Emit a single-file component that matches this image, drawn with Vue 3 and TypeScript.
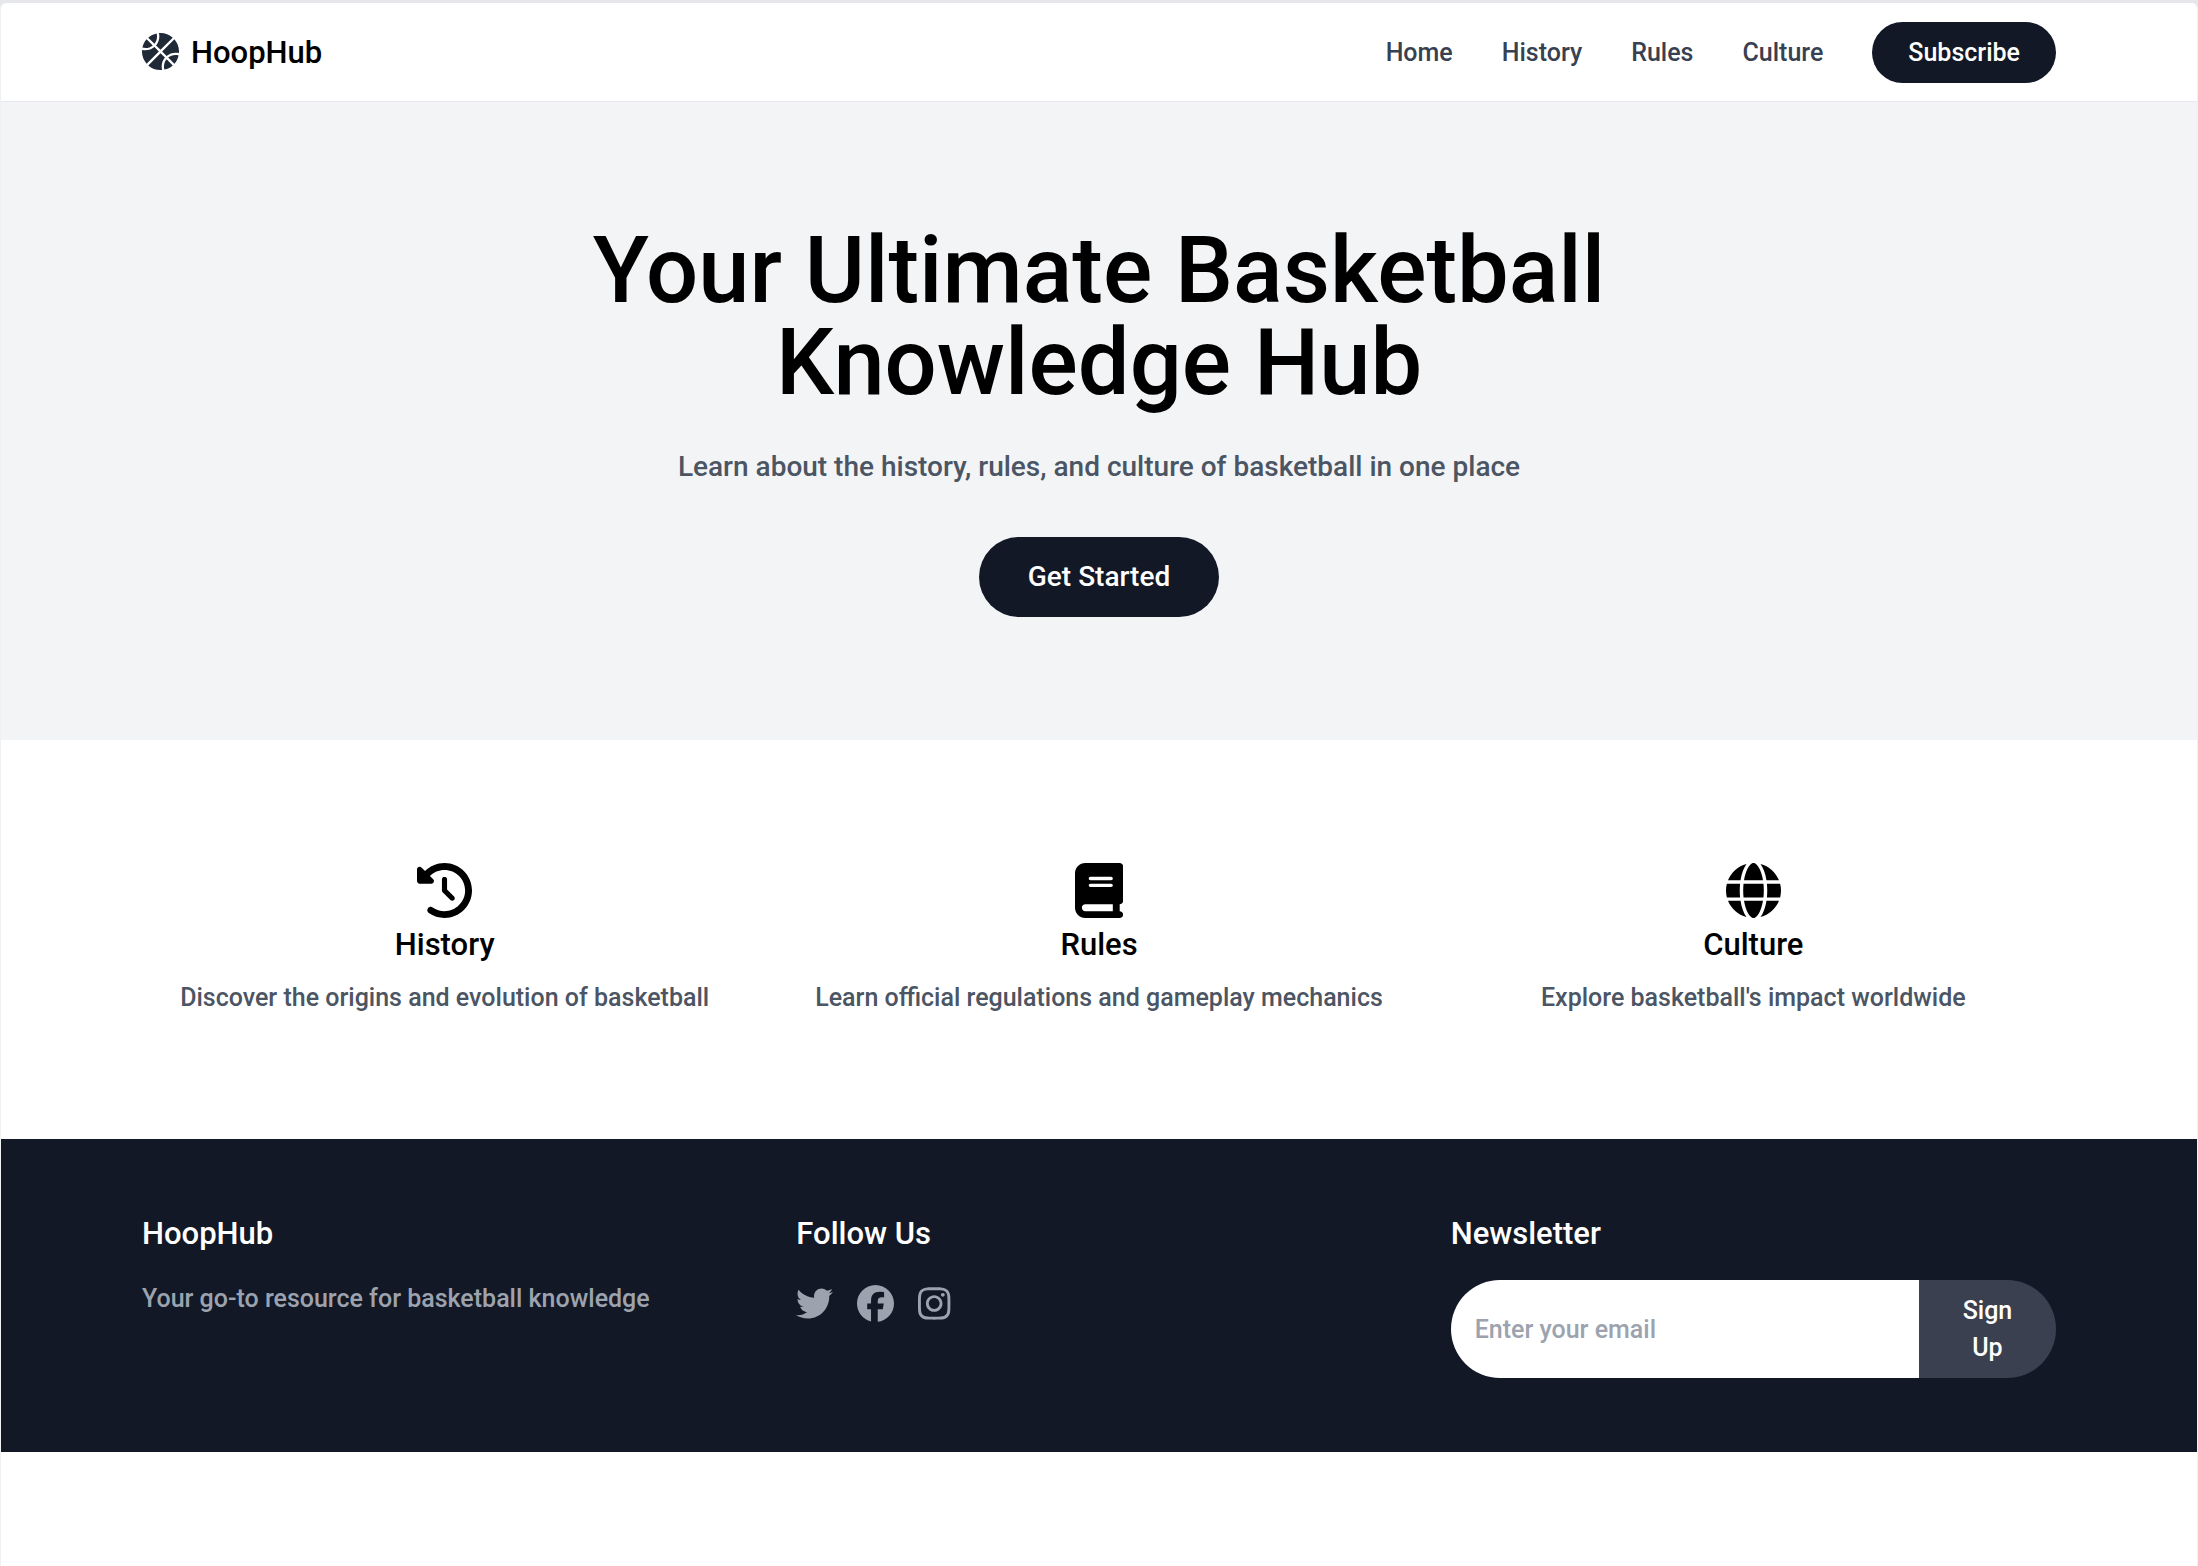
<script setup lang="ts">
import { ref } from 'vue'

interface Icon {
  viewBox: string
  path: string
}

interface Feature extends Icon {
  title: string
  text: string
}

interface Social extends Icon {
  name: string
}

const email = ref('')

const links: string[] = ['Home', 'History', 'Rules', 'Culture']

const features: Feature[] = [
  {
    title: 'History',
    text: 'Discover the origins and evolution of basketball',
    viewBox: '0 0 512 512',
    path: 'M75 75L41 41C25.9 25.9 0 36.6 0 57.9V168c0 13.3 10.7 24 24 24H134.1c21.4 0 32.1-25.9 17-41l-30.8-30.8C155 85.5 203 64 256 64c106 0 192 86 192 192s-86 192-192 192c-40.8 0-78.6-12.7-109.7-34.4c-14.5-10.1-34.4-6.6-44.6 7.9s-6.6 34.4 7.9 44.6C151.2 495 201.7 512 256 512c141.4 0 256-114.6 256-256S397.4 0 256 0C185.3 0 121.3 28.7 75 75zm181 53c-13.3 0-24 10.7-24 24V256c0 6.4 2.5 12.5 7 17l72 72c9.4 9.4 24.6 9.4 33.9 0s9.4-24.6 0-33.9l-65-65V152c0-13.3-10.7-24-24-24z',
  },
  {
    title: 'Rules',
    text: 'Learn official regulations and gameplay mechanics',
    viewBox: '0 0 448 512',
    path: 'M96 0C43 0 0 43 0 96V416c0 53 43 96 96 96H384h32c17.7 0 32-14.3 32-32s-14.3-32-32-32V384c17.7 0 32-14.3 32-32V32c0-17.7-14.3-32-32-32H384 96zm0 384H352v64H96c-17.7 0-32-14.3-32-32s14.3-32 32-32zm32-240c0-8.8 7.2-16 16-16H336c8.8 0 16 7.2 16 16s-7.2 16-16 16H144c-8.8 0-16-7.2-16-16zm16 48H336c8.8 0 16 7.2 16 16s-7.2 16-16 16H144c-8.8 0-16-7.2-16-16s7.2-16 16-16z',
  },
  {
    title: 'Culture',
    text: "Explore basketball's impact worldwide",
    viewBox: '0 0 512 512',
    path: 'M352 256c0 22.2-1.2 43.6-3.3 64H163.3c-2.2-20.4-3.3-41.8-3.3-64s1.2-43.6 3.3-64H348.7c2.2 20.4 3.3 41.8 3.3 64zm28.8-64H503.9c5.3 20.5 8.1 41.9 8.1 64s-2.8 43.5-8.1 64H380.8c2.1-20.6 3.2-42 3.2-64s-1.1-43.4-3.2-64zm112.6-32H376.7c-10-63.9-29.8-117.4-55.3-151.6c78.3 20.7 142 77.5 171.9 151.6zm-149.1 0H167.7c6.1-36.4 15.5-68.6 27-94.7c10.5-23.6 22.2-40.7 33.5-51.5C239.4 3.2 248.7 0 256 0s16.6 3.2 27.8 13.8c11.3 10.8 23 27.9 33.5 51.5c11.6 26 20.9 58.2 27 94.7zm-209 0H18.6C48.6 85.9 112.2 29.1 190.6 8.4C165.1 42.6 145.3 96.1 135.3 160zM8.1 192H131.2c-2.1 20.6-3.2 42-3.2 64s1.1 43.4 3.2 64H8.1C2.8 299.5 0 278.1 0 256s2.8-43.5 8.1-64zM194.7 446.6c-11.6-26-20.9-58.2-27-94.6H344.3c-6.1 36.4-15.5 68.6-27 94.6c-10.5 23.6-22.2 40.7-33.5 51.5C272.6 508.8 263.3 512 256 512s-16.6-3.2-27.8-13.8c-11.3-10.8-23-27.9-33.5-51.5zM135.3 352c10 63.9 29.8 117.4 55.3 151.6C112.2 482.9 48.6 426.1 18.6 352H135.3zm358.1 0c-30 74.1-93.6 130.9-171.9 151.6c25.5-34.2 45.2-87.7 55.3-151.6H493.4z',
  },
]

const socials: Social[] = [
  {
    name: 'Twitter',
    viewBox: '0 0 512 512',
    path: 'M459.37 151.716c.325 4.548.325 9.097.325 13.645 0 138.72-105.583 298.558-298.558 298.558-59.452 0-114.68-17.219-161.137-47.106 8.447.974 16.568 1.299 25.34 1.299 49.055 0 94.213-16.568 130.274-44.832-46.132-.975-84.792-31.188-98.112-72.772 6.498.974 12.995 1.624 19.818 1.624 9.421 0 18.843-1.3 27.614-3.573-48.081-9.747-84.143-51.98-84.143-102.985v-1.299c13.969 7.797 30.214 12.67 47.431 13.319-28.264-18.843-46.781-51.005-46.781-87.391 0-19.492 5.197-37.36 14.294-52.954 51.655 63.675 129.3 105.258 216.365 109.807-1.624-7.797-2.599-15.918-2.599-24.04 0-57.828 46.782-104.934 104.934-104.934 30.213 0 57.502 12.67 76.67 33.137 23.715-4.548 46.456-13.32 66.599-25.34-7.798 24.366-24.366 44.833-46.132 57.827 21.117-2.273 41.584-8.122 60.426-16.243-14.292 20.791-32.161 39.308-52.628 54.253z',
  },
  {
    name: 'Facebook',
    viewBox: '0 0 512 512',
    path: 'M512 256C512 114.6 397.4 0 256 0S0 114.6 0 256C0 376 82.7 476.8 194.2 504.5V334.2H141.4V256h52.8V222.3c0-87.1 39.4-127.5 125-127.5c16.2 0 44.2 3.2 55.7 6.4V172c-6-.6-16.5-1-29.6-1c-42 0-58.2 15.9-58.2 57.2V256h83.6l-14.4 78.2H287V510.1C413.8 494.8 512 386.9 512 256z',
  },
  {
    name: 'Instagram',
    viewBox: '0 0 448 512',
    path: 'M224.1 141c-63.6 0-114.9 51.3-114.9 114.9s51.3 114.9 114.9 114.9S339 319.5 339 255.9 287.7 141 224.1 141zm0 189.6c-41.1 0-74.7-33.5-74.7-74.7s33.5-74.7 74.7-74.7 74.7 33.5 74.7 74.7-33.6 74.7-74.7 74.7zm146.4-194.3c0 14.9-12 26.8-26.8 26.8-14.9 0-26.8-12-26.8-26.8s12-26.8 26.8-26.8 26.8 12 26.8 26.8zm76.1 27.2c-1.7-35.9-9.9-67.7-36.2-93.9-26.2-26.2-58-34.4-93.9-36.2-37-2.1-147.9-2.1-184.9 0-35.8 1.7-67.6 9.9-93.9 36.1s-34.4 58-36.2 93.9c-2.1 37-2.1 147.9 0 184.9 1.7 35.9 9.9 67.7 36.2 93.9s58 34.4 93.9 36.2c37 2.1 147.9 2.1 184.9 0 35.9-1.7 67.7-9.9 93.9-36.2 26.2-26.2 34.4-58 36.2-93.9 2.1-37 2.1-147.8 0-184.8zM398.8 388c-7.8 19.6-22.9 34.7-42.6 42.6-29.5 11.7-99.5 9-132.1 9s-102.7 2.6-132.1-9c-19.6-7.8-34.7-22.9-42.6-42.6-11.7-29.5-9-99.5-9-132.1s-2.6-102.7 9-132.1c7.8-19.6 22.9-34.7 42.6-42.6 29.5-11.7 99.5-9 132.1-9s102.7-2.6 132.1 9c19.6 7.8 34.7 22.9 42.6 42.6 11.7 29.5 9 99.5 9 132.1s2.7 102.7-9 132.1z',
  },
]
</script>

<template>
  <div class="page">
    <header class="topbar">
      <div class="container topbar-row">
        <div class="brand">
          <svg class="brand-icon" viewBox="0 0 512 512" aria-hidden="true">
            <path
              d="M86.6 64l85.2 85.2C194.5 121.7 208 86.4 208 48c0-14.7-2-28.9-5.7-42.4C158.6 15 119 35.5 86.6 64zM64 86.6C35.5 119 15 158.6 5.6 202.3C19.1 206 33.3 208 48 208c38.4 0 73.7-13.5 101.3-36.1L64 86.6zM256 0c-7.3 0-14.6 .3-21.8 .9C238 16 240 31.8 240 48c0 47.3-17.1 90.5-45.4 124L256 233.4 425.4 64C380.2 24.2 320.9 0 256 0zM48 240c-16.2 0-32-2-47.1-5.8C.3 241.4 0 248.7 0 256c0 64.9 24.2 124.2 64 169.4L233.4 256 172 194.6C138.5 222.9 95.3 240 48 240zm463.1 37.8c.6-7.2 .9-14.5 .9-21.8c0-64.9-24.2-124.2-64-169.4L278.6 256 340 317.4c33.4-28.3 76.7-45.4 124-45.4c16.2 0 32 2 47.1 5.8zm-4.7 31.9C492.9 306 478.7 304 464 304c-38.4 0-73.7 13.5-101.3 36.1L448 425.4c28.5-32.3 49.1-71.9 58.4-115.7zM340.1 362.7C317.5 390.3 304 425.6 304 464c0 14.7 2 28.9 5.7 42.4C353.4 497 393 476.5 425.4 448l-85.2-85.2zM317.4 340L256 278.6 86.6 448c45.1 39.8 104.4 64 169.4 64c7.3 0 14.6-.3 21.8-.9C274 496 272 480.2 272 464c0-47.3 17.1-90.5 45.4-124z"
            />
          </svg>
          <span class="heading">HoopHub</span>
        </div>
        <nav class="menu">
          <a v-for="link in links" :key="link" class="menu-link" href="#">{{ link }}</a>
          <button class="pill subscribe" type="button">Subscribe</button>
        </nav>
      </div>
    </header>

    <main>
      <section class="hero">
        <h1 class="hero-title">Your Ultimate Basketball Knowledge Hub</h1>
        <p class="hero-lead">Learn about the history, rules, and culture of basketball in one place</p>
        <button class="pill start" type="button">Get Started</button>
      </section>

      <section class="features">
        <div class="container columns">
          <article v-for="feature in features" :key="feature.title" class="feature">
            <svg class="feature-icon" :viewBox="feature.viewBox" aria-hidden="true">
              <path :d="feature.path" />
            </svg>
            <h3 class="heading">{{ feature.title }}</h3>
            <p class="feature-text">{{ feature.text }}</p>
          </article>
        </div>
      </section>
    </main>

    <footer class="footer">
      <div class="container columns">
        <div>
          <h4 class="heading footer-heading">HoopHub</h4>
          <p class="footer-text">Your go-to resource for basketball knowledge</p>
        </div>
        <div>
          <h4 class="heading footer-heading">Follow Us</h4>
          <div class="socials">
            <a v-for="social in socials" :key="social.name" class="social" href="#" :aria-label="social.name">
              <svg class="social-icon" :viewBox="social.viewBox" aria-hidden="true">
                <path :d="social.path" />
              </svg>
            </a>
          </div>
        </div>
        <div>
          <h4 class="heading footer-heading">Newsletter</h4>
          <form class="signup" @submit.prevent>
            <input
              v-model="email"
              class="signup-input"
              type="email"
              placeholder="Enter your email"
              aria-label="Email address"
            />
            <button class="signup-button" type="submit">Sign Up</button>
          </form>
        </div>
      </div>
    </footer>
  </div>
</template>

<style>
body {
  margin: 0;
  padding-top: 3px;
  background: #e5e7eb;
}
</style>

<style scoped>
.page {
  box-sizing: border-box;
  min-height: calc(100vh - 3px);
  border: 1px solid #f0f1f3;
  border-top: 0;
  border-bottom: 0;
  border-radius: 6px 6px 0 0;
  overflow: hidden;
  background: #fff;
  color: #000;
  font-family: Roboto, "Liberation Sans", sans-serif;
  font-size: 25px;
  font-weight: 500;
  line-height: 37px;
}

h1,
h3,
h4,
p {
  margin: 0;
  font-weight: 500;
}

button,
input {
  border: 0;
  font: inherit;
}

.container {
  box-sizing: border-box;
  max-width: 1962px;
  margin: 0 auto;
  padding: 0 24px;
}

.heading {
  font-size: 31px;
  line-height: 43px;
}

.topbar {
  border-bottom: 1px solid #e5e7eb;
}

.topbar-row {
  display: flex;
  align-items: center;
  justify-content: space-between;
  height: 98px;
}

.brand {
  display: flex;
  align-items: center;
  gap: 12px;
}

.brand-icon {
  width: 37px;
  height: 37px;
  margin-bottom: 2px;
  fill: #1f2937;
}

.menu {
  display: flex;
  align-items: center;
  gap: 49px;
}

.menu-link {
  color: #374151;
  text-decoration: none;
}

.pill {
  border-radius: 999px;
  background: #121826;
  color: #fff;
}

.subscribe {
  padding: 12px 36px;
}

.hero {
  display: flex;
  flex-direction: column;
  align-items: center;
  padding: 123px 24px;
  background: #f3f4f6;
  text-align: center;
}

.hero-title {
  max-width: 1180px;
  margin-bottom: 36px;
  font-size: 92px;
  line-height: 92px;
}

.hero-lead {
  margin-bottom: 49px;
  color: #4b5563;
  font-size: 28px;
  line-height: 43px;
}

.start {
  padding: 18px 49px 19px;
  font-size: 28px;
  line-height: 43px;
}

.features {
  padding: 123px 0;
}

.columns {
  display: grid;
  grid-template-columns: repeat(3, 1fr);
  gap: 49px;
}

.feature {
  display: flex;
  flex-direction: column;
  align-items: center;
  text-align: center;
}

.feature-icon {
  height: 55px;
  margin-bottom: 5px;
}

.feature-text {
  margin-top: 13px;
  color: #4b5563;
}

.footer {
  padding: 73px 0 74px;
  background: #121826;
  color: #fff;
}

.footer-heading {
  margin-bottom: 25px;
}

.footer-text {
  color: #9ca3af;
}

.socials {
  display: flex;
  gap: 24px;
  padding-top: 5px;
}

.social {
  display: flex;
  color: #9ca3af;
}

.social-icon {
  height: 37px;
  fill: currentColor;
}

.signup {
  display: flex;
}

.signup-input {
  flex: 1;
  min-width: 0;
  padding: 12px 24px;
  border-radius: 49px 0 0 49px;
  background: #fff;
  color: #000;
}

.signup-input::placeholder {
  color: #9ca3af;
  opacity: 1;
}

.signup-button {
  width: 137px;
  padding: 12px 37px;
  border-radius: 0 49px 49px 0;
  background: #3a4050;
  color: #fff;
}
</style>
